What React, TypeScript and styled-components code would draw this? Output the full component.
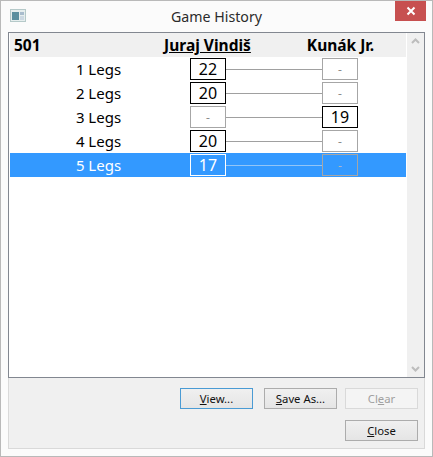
import React from "react";
import styled, { createGlobalStyle } from "styled-components";

const Global = createGlobalStyle`
  html, body { margin: 0; padding: 0; background: #fff; }
  body { font-family: "Noto Sans", "Open Sans", sans-serif; }
`;

const Win = styled.div`
  box-sizing: border-box;
  width: 433px;
  height: 457px;
  border: 1px solid #b9b9b9;
  background: #fbfbfb;
  padding: 0 7px 7px;
  display: flex;
  flex-direction: column;
`;

const TitleBar = styled.div`
  height: 31px;
  flex: none;
  display: flex;
  align-items: center;
  position: relative;
`;

const Title = styled.div`
  flex: 1;
  text-align: center;
  font-size: 14.2px;
  color: #2b2b2b;
  padding: 0 0 1px 0;
`;

const AppIcon = styled.svg`
  position: absolute;
  left: 2px;
  top: 8px;
`;

const CloseX = styled.div`
  position: absolute;
  right: -1px;
  top: 0;
  width: 31px;
  height: 20px;
  background: #c75050;
  display: flex;
  align-items: center;
  justify-content: center;
`;

const Panel = styled.div`
  flex: 1;
  display: flex;
  flex-direction: column;
  background: #f0f0f0;
  border-left: 1px solid #d9d9d9;
  border-right: 1px solid #d9d9d9;
  border-bottom: 1px solid #d9d9d9;
  min-height: 0;
`;

const ListBox = styled.div`
  height: 346px;
  flex: none;
  box-sizing: border-box;
  border: 1px solid #828790;
  background: #fff;
  display: flex;
  margin-left: -1px;
  margin-right: -1px;
`;

const ListArea = styled.div`
  flex: 1;
  padding-left: 1px;
  min-width: 0;
`;

const Row = styled.div<{ $kind?: "head" | "selected" }>`
  height: 24px;
  display: grid;
  grid-template-columns: 180px 36px 96px 36px 1fr;
  align-items: center;
  background: ${(p) => (p.$kind === "head" ? "#f0f0f0" : p.$kind === "selected" ? "#3399ff" : "transparent")};
  color: ${(p) => (p.$kind === "selected" ? "#fff" : "#000")};
  font-size: 15px;
`;

const HeadRow = styled(Row)`
  grid-template-columns: 132px 131px 135px 1fr;
  font-weight: 700;
  font-size: 15.5px;
`;

const Format = styled.div`
  padding-left: 4px;
`;

const Player = styled.div<{ $winner?: boolean }>`
  text-align: center;
  white-space: nowrap;
  text-decoration: ${(p) => (p.$winner ? "underline" : "none")};
`;

const Leg = styled.div`
  text-align: center;
  padding-right: 3px;
  white-space: nowrap;
  font-size: 15px;
`;

const Score = styled.div<{ $won?: boolean; $selected?: boolean }>`
  box-sizing: border-box;
  height: 22px;
  width: 36px;
  display: flex;
  align-items: center;
  justify-content: center;
  font-size: ${(p) => (p.$won ? "16px" : "12px")};
  border: 1px solid ${(p) => (p.$won ? (p.$selected ? "#fff" : "#000") : "#a6a6a6")};
  color: ${(p) => (p.$won ? "inherit" : p.$selected ? "#a9b6c4" : "#8c8c8c")};
`;

const Link = styled.div<{ $selected?: boolean }>`
  height: 1px;
  background: ${(p) => (p.$selected ? "#92c5f7" : "#a0a0a0")};
`;

const ScrollBar = styled.div`
  width: 17px;
  flex: none;
  background: #f0f0f0;
  display: flex;
  flex-direction: column;
  justify-content: space-between;
  align-items: center;
  padding: 5px 0;
  margin-left: 1px;
`;

const Actions = styled.div`
  flex: 1;
  display: grid;
  grid-template-columns: 84px 81px 73px;
  grid-template-rows: 21px 21px;
  row-gap: 11px;
  justify-content: end;
  padding: 10px 6px 0 0;
`;

const Button = styled.div<{ $state?: "default" | "disabled" }>`
  box-sizing: border-box;
  width: 73px;
  font-size: 11.3px;
  display: flex;
  align-items: center;
  justify-content: center;
  color: ${(p) => (p.$state === "disabled" ? "#a0a0a0" : "#111")};
  border: 1px solid
    ${(p) => (p.$state === "default" ? "#4a9bd4" : p.$state === "disabled" ? "#d9d9d9" : "#acacac")};
  background: ${(p) =>
    p.$state === "disabled" ? "#f4f4f4" : "linear-gradient(#f0f0f0, #e5e5e5)"};
  u { text-underline-offset: 1px; }
`;

const CloseButton = styled(Button)`
  grid-column: 3;
`;

const rows = [
  { leg: "1 Legs", a: "22", b: "-" },
  { leg: "2 Legs", a: "20", b: "-" },
  { leg: "3 Legs", a: "-", b: "19" },
  { leg: "4 Legs", a: "20", b: "-" },
  { leg: "5 Legs", a: "17", b: "-" },
];

export default function App() {
  return (
    <>
      <Global />
      <Win>
        <TitleBar>
          <AppIcon width="16" height="14" viewBox="0 0 16 14">
            <rect x="0.5" y="0.5" width="15" height="12" fill="#e6eeee" stroke="#b5c9c9" />
            <rect x="2" y="3" width="7" height="8" fill="#5b8f9f" />
            <rect x="10" y="3" width="4" height="3" fill="#a9bccd" />
            <rect x="10" y="7" width="4" height="4" fill="#ccd8e2" />
          </AppIcon>
          <Title>Game History</Title>
          <CloseX>
            <svg width="10" height="10" viewBox="0 0 10 10">
              <path d="M1.5 1.5 L8.5 8.5 M8.5 1.5 L1.5 8.5" stroke="#fff" strokeWidth="2" />
            </svg>
          </CloseX>
        </TitleBar>
        <Panel>
          <ListBox>
            <ListArea>
              <HeadRow $kind="head">
                <Format>501</Format>
                <Player $winner>Juraj Vindiš</Player>
                <Player>Kunák Jr.</Player>
              </HeadRow>
              {rows.map((r, i) => {
                const sel = i === 4;
                return (
                  <Row key={r.leg} $kind={sel ? "selected" : undefined}>
                    <Leg>{r.leg}</Leg>
                    <Score $won={r.a !== "-"} $selected={sel}>{r.a}</Score>
                    <Link $selected={sel} />
                    <Score $won={r.b !== "-"} $selected={sel}>{r.b}</Score>
                  </Row>
                );
              })}
            </ListArea>
            <ScrollBar>
              <svg width="9" height="6" viewBox="0 0 9 6">
                <path d="M1 5 L4.5 1.5 L8 5" fill="none" stroke="#bdbdbd" strokeWidth="2" />
              </svg>
              <svg width="9" height="6" viewBox="0 0 9 6">
                <path d="M1 1 L4.5 4.5 L8 1" fill="none" stroke="#bdbdbd" strokeWidth="2" />
              </svg>
            </ScrollBar>
          </ListBox>
          <Actions>
            <Button $state="default"><span><u>V</u>iew...</span></Button>
            <Button><span><u>S</u>ave As...</span></Button>
            <Button $state="disabled"><span>Cl<u>e</u>ar</span></Button>
            <CloseButton><span><u>C</u>lose</span></CloseButton>
          </Actions>
        </Panel>
      </Win>
    </>
  );
}
